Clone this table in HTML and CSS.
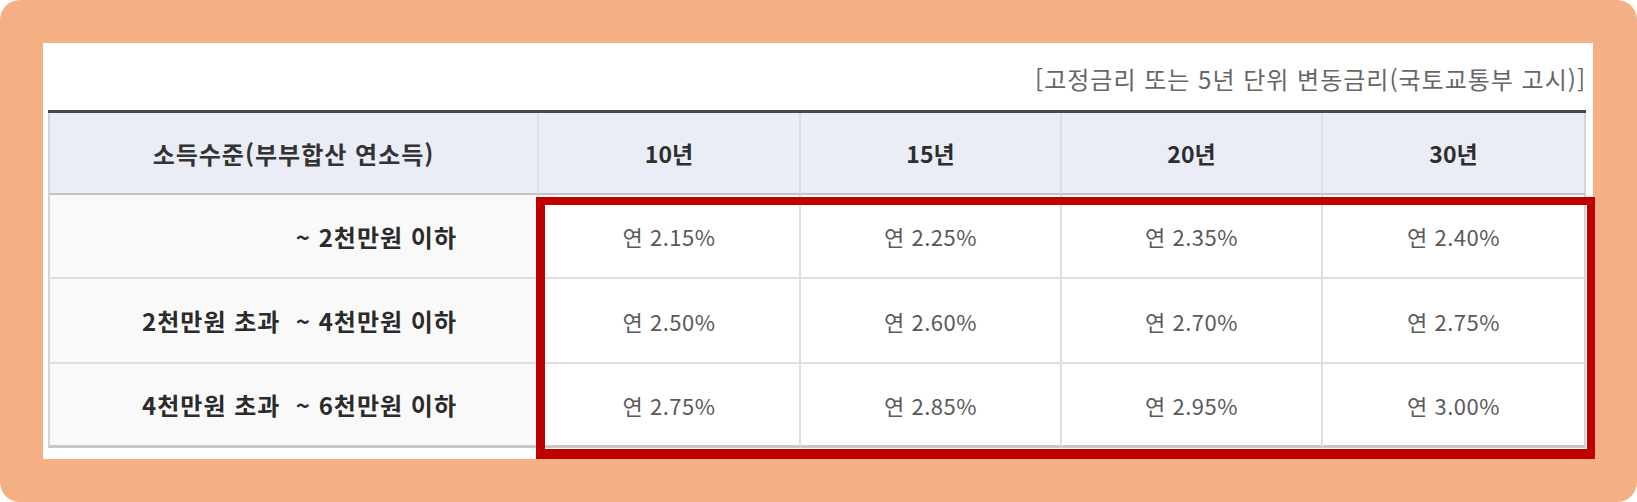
FILE: index.html
```html
<!DOCTYPE html>
<html lang="ko">
<head>
<meta charset="utf-8">
<title>금리표</title>
<link rel="stylesheet" href="styles.css">
</head>
<body>
<div class="frame">
  <div class="panel">
    <div class="caption">[고정금리 또는 5년 단위 변동금리(국토교통부 고시)]</div>
    <div class="rate-table">
      <div class="cell head first">소득수준(부부합산 연소득)</div>
      <div class="cell head year">10년</div>
      <div class="cell head year">15년</div>
      <div class="cell head year">20년</div>
      <div class="cell head year last">30년</div>

      <div class="cell label">~ 2천만원 이하</div>
      <div class="cell rate">연 2.15%</div>
      <div class="cell rate">연 2.25%</div>
      <div class="cell rate">연 2.35%</div>
      <div class="cell rate last">연 2.40%</div>

      <div class="cell label">2천만원 초과&nbsp;&nbsp;~ 4천만원 이하</div>
      <div class="cell rate">연 2.50%</div>
      <div class="cell rate">연 2.60%</div>
      <div class="cell rate">연 2.70%</div>
      <div class="cell rate last">연 2.75%</div>

      <div class="cell label bottom">4천만원 초과&nbsp;&nbsp;~ 6천만원 이하</div>
      <div class="cell rate bottom">연 2.75%</div>
      <div class="cell rate bottom">연 2.85%</div>
      <div class="cell rate bottom">연 2.95%</div>
      <div class="cell rate bottom last">연 3.00%</div>
    </div>
  </div>
  <div class="highlight"></div>
</div>
</body>
</html>
```

FILE: styles.css
```css
* { box-sizing: border-box; }

html, body {
  margin: 0;
  padding: 0;
  background: #ffffff;
}

body {
  font-family: "Noto Sans CJK KR", "Noto Sans", sans-serif;
}

.frame {
  position: relative;
  width: 1637px;
  height: 502px;
  background: #f4b084;
  border-radius: 20px;
  padding: 43px 44px 43px 43px;
}

.panel {
  width: 1550px;
  height: 416px;
  background: #ffffff;
  padding: 0 7px 11px 5px;
}

.caption {
  height: 67px;
  padding: 21px 0 0 0;
  line-height: 30px;
  text-align: right;
  font-size: 24px;
  letter-spacing: 1px;
  color: #666666;
  white-space: nowrap;
}

.rate-table {
  display: grid;
  grid-template-columns: 491px 262px 261px 261px 263px;
  grid-template-rows: 82px 84px 85px 84px;
  border-top: 3px solid #4b4644;
}

.cell {
  display: flex;
  align-items: center;
  justify-content: center;
  border-right: 2px solid #dedede;
  border-bottom: 2px solid #dedede;
  white-space: nowrap;
}

.cell.last { border-right-color: #d4d4d4; }

.head {
  background: #eaedf5;
  border-bottom: 2px solid #c4c4c4;
  font-size: 23px;
  font-weight: 700;
  color: #2e2e2e;
}

.head.first {
  border-left: 2px solid #d4d4d4;
  font-size: 24px;
  letter-spacing: 1px;
  color: #333333;
}

.label {
  background: #f9f9f9;
  border-left: 2px solid #d4d4d4;
  justify-content: flex-end;
  padding-right: 80px;
  font-size: 24px;
  letter-spacing: 1px;
  font-weight: 700;
  color: #2b2b2b;
}

.rate {
  background: #ffffff;
  font-size: 22px;
  letter-spacing: 0.5px;
  color: #5a5a5a;
}

.bottom { border-bottom: 3px solid #c8c8c8; }

.highlight {
  position: absolute;
  left: 536px;
  top: 197px;
  width: 1059px;
  height: 262px;
  border-style: solid;
  border-color: #c00000;
  border-width: 8px 8px 10px 9px;
  pointer-events: none;
}
```
